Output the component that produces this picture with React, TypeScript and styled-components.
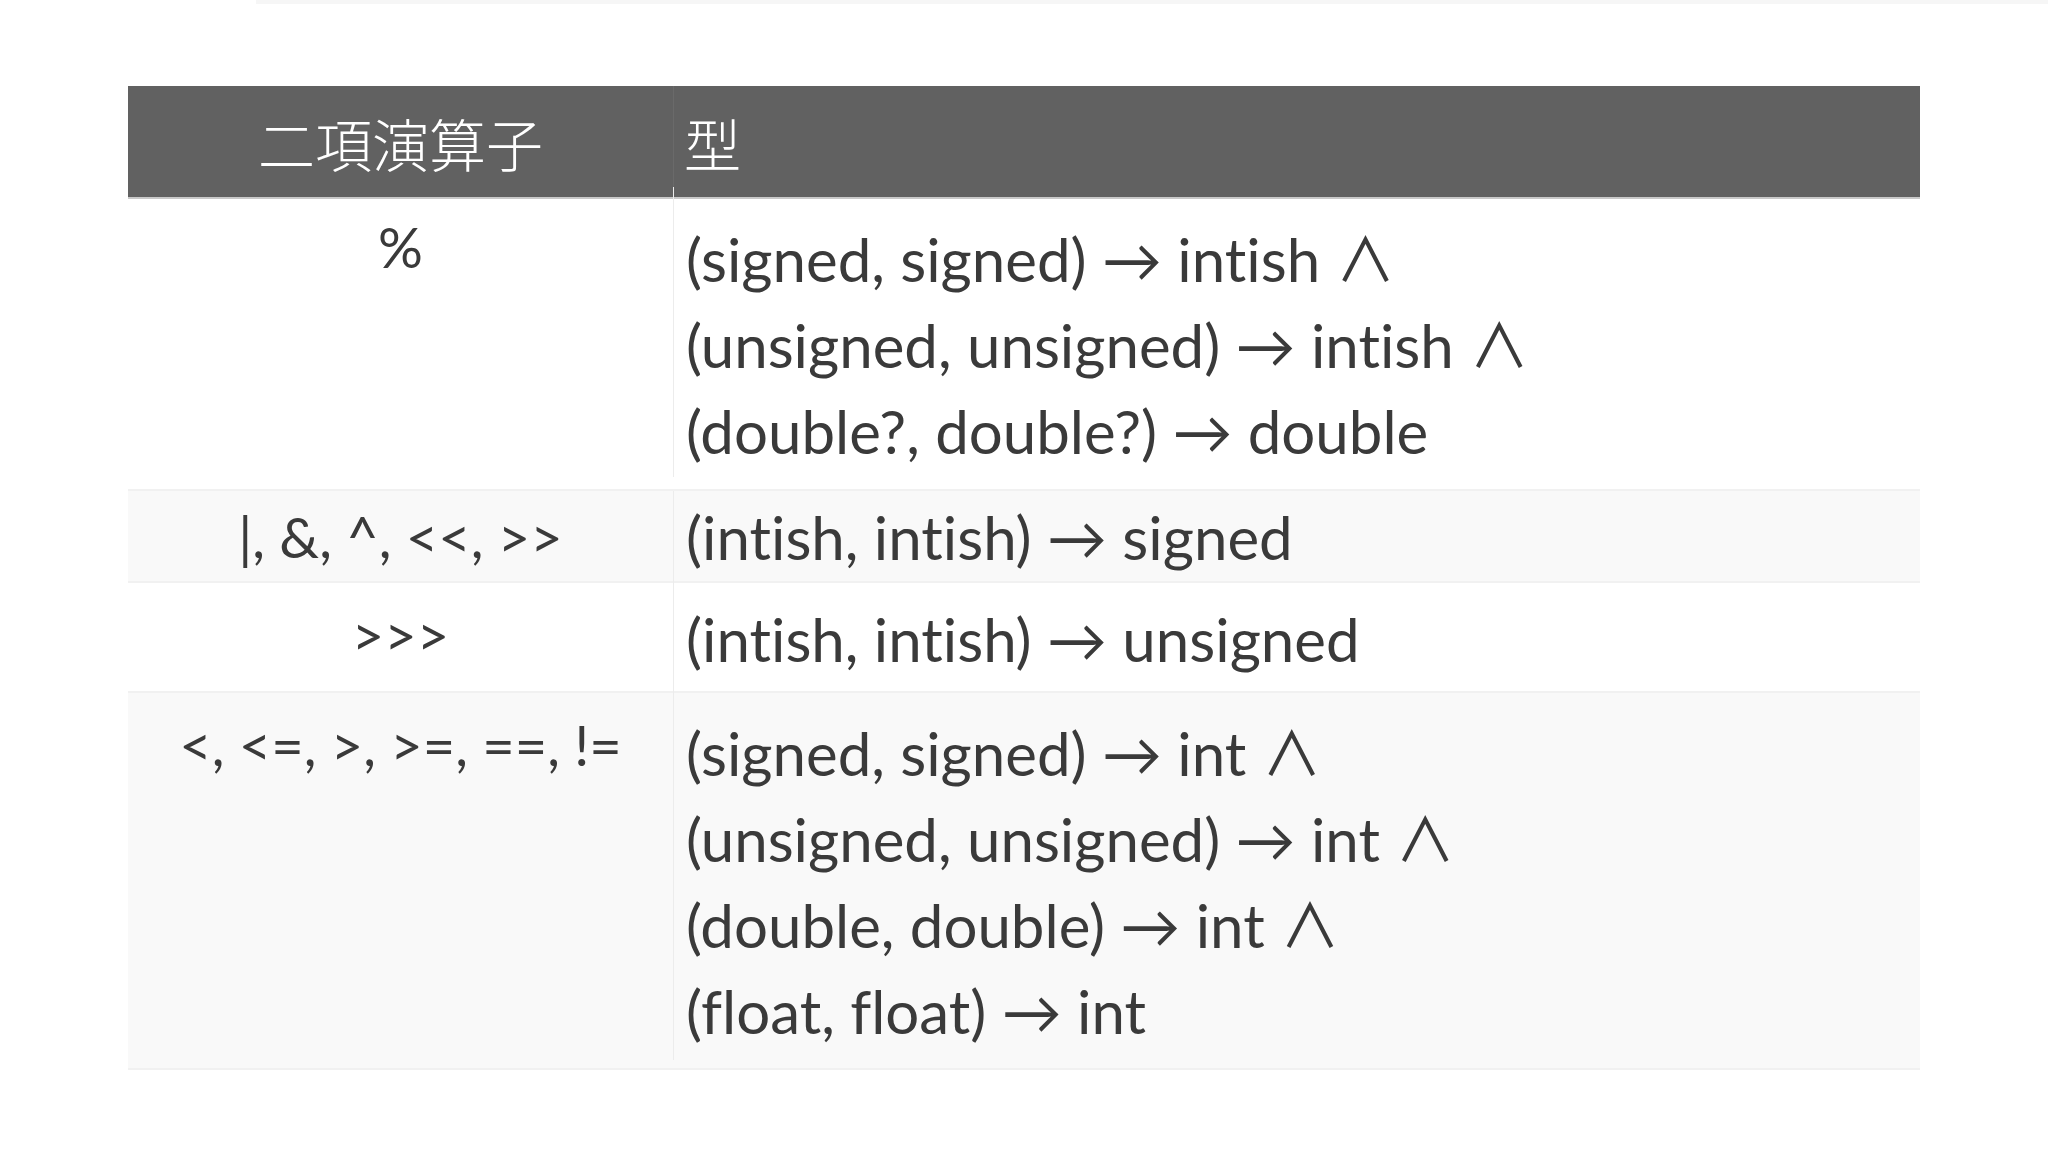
import React from 'react';
import styled, { createGlobalStyle } from 'styled-components';

const GlobalStyle = createGlobalStyle`
	html, body {
		margin: 0;
		padding: 0;
		background: #ffffff;
	}
	body {
		font-family: Lato, "Noto Sans CJK JP", "DejaVu Sans", sans-serif;
		font-variant-ligatures: none;
		color: #3a3a3a;
	}
`;

const PageUI = styled.div`
	width: 2048px;
	height: 1152px;
	overflow: hidden;
`;

const TopRuleUI = styled.div`
	height: 4px;
	margin-left: 256px;
	background: #f6f6f6;
`;

const TableUI = styled.div`
	width: 1792px;
	margin: 82px 0 0 128px;
`;

const HeadUI = styled.div`
	display: grid;
	grid-template-columns: 546px 1fr;
	height: 113px;
	background: #616161;
	border-bottom: 2px solid #c9c9c9;
	box-sizing: border-box;
	color: #ffffff;
	font-family: "Noto Sans CJK JP", sans-serif;
	font-size: 57px;
	font-weight: 300;

	div {
		display: flex;
		align-items: center;
	}

	div:first-child {
		justify-content: center;
		border-right: 1px solid #6a6a6a;
	}

	div:last-child {
		padding-left: 10px;
	}
`;

const RowUI = styled.div<{ $shade?: boolean; $pad: [number, number] }>`
	display: grid;
	grid-template-columns: 546px 1fr;
	background: ${(p) => (p.$shade ? '#f9f9f9' : '#ffffff')};
	border-bottom: 2px solid #f1f1f1;
	font-size: 60px;
	line-height: 86px;

	& > div {
		padding: ${(p) => `${p.$pad[0]}px 0 ${p.$pad[1]}px`};
	}
`;

const OpCellUI = styled.div<{ $lift: number }>`
	text-align: center;
	border-right: 1px solid #ececec;
	transform: translateY(${(p) => -p.$lift}px);
	font-size: 56px;
`;

const TypeCellUI = styled.div`
	padding-left: 12px !important;

	p {
		margin: 0;
		white-space: nowrap;
	}
`;

type Row = { op: string; types: string[]; shade?: boolean; pad: [number, number]; lift: number };

const rows: Row[] = [
	{
		op: '%',
		types: ['(signed, signed) → intish ∧', '(unsigned, unsigned) → intish ∧', '(double?, double?) → double'],
		pad: [17, 15],
		lift: 12,
	},
	{ op: '|, &, ^, <<, >>', types: ['(intish, intish) → signed'], shade: true, pad: [3, 1], lift: 0 },
	{ op: '>>>', types: ['(intish, intish) → unsigned'], pad: [13, 9], lift: 4 },
	{
		op: '<, <=, >, >=, ==, !=',
		types: [
			'(signed, signed) → int ∧',
			'(unsigned, unsigned) → int ∧',
			'(double, double) → int ∧',
			'(float, float) → int',
		],
		shade: true,
		pad: [17, 14],
		lift: 8,
	},
];

const renderRowsJSX = () =>
	rows.map((row) => (
		<RowUI key={row.op} $shade={row.shade} $pad={row.pad}>
			<OpCellUI $lift={row.lift}>{row.op}</OpCellUI>
			<TypeCellUI>
				{row.types.map((t) => (
					<p key={t}>{t}</p>
				))}
			</TypeCellUI>
		</RowUI>
	));

const App = () => (
	<PageUI>
		<GlobalStyle />
		<TopRuleUI />
		<TableUI>
			<HeadUI>
				<div>二項演算子</div>
				<div>型</div>
			</HeadUI>
			{renderRowsJSX()}
		</TableUI>
	</PageUI>
);

export default App;
